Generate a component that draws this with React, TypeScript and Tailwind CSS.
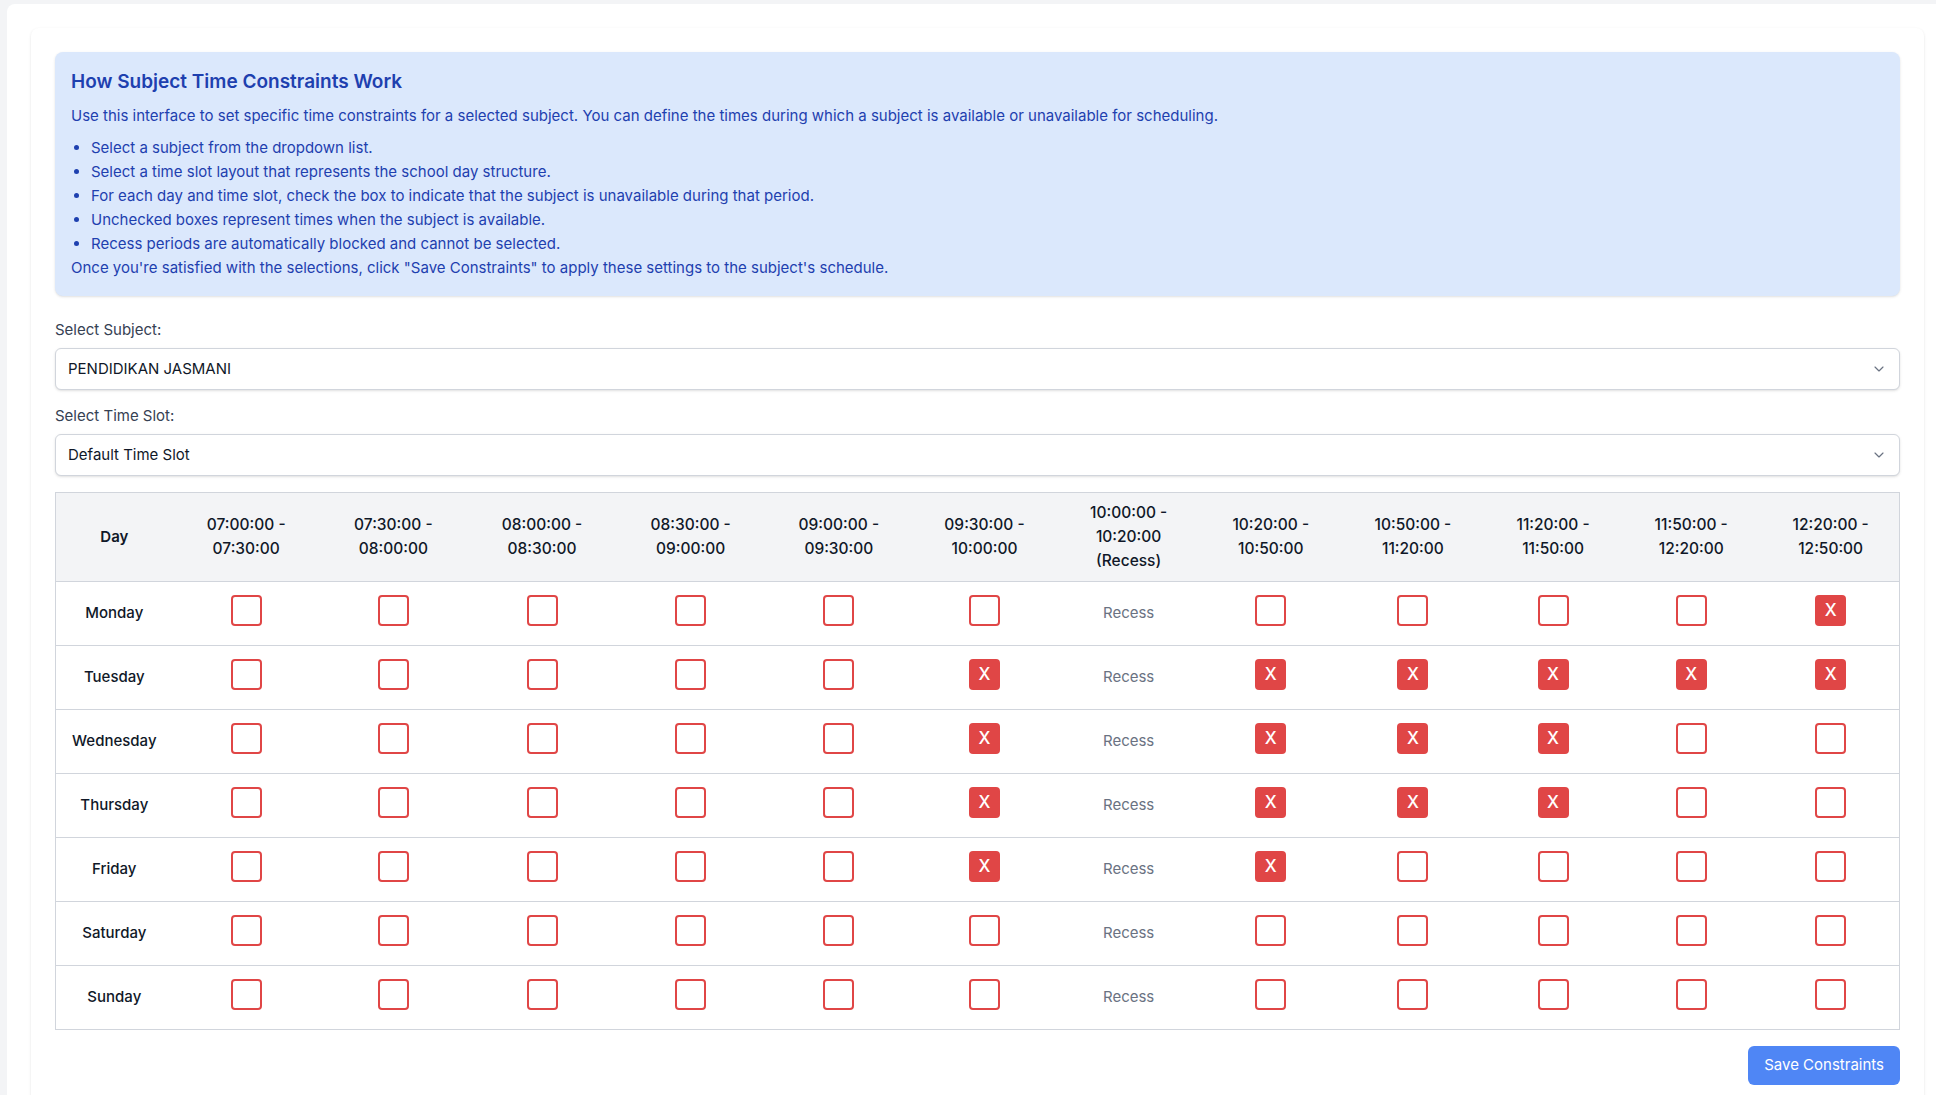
import { ChevronDown } from "lucide-react";

const slots = [
    { start: "07:00:00", end: "07:30:00", w: "w-[147px]" },
    { start: "07:30:00", end: "08:00:00", w: "w-[147px]" },
    { start: "08:00:00", end: "08:30:00", w: "w-[150px]" },
    { start: "08:30:00", end: "09:00:00", w: "w-[147px]" },
    { start: "09:00:00", end: "09:30:00", w: "w-[149px]" },
    { start: "09:30:00", end: "10:00:00", w: "w-[142px]" },
    { start: "10:00:00", end: "10:20:00", w: "w-[146px]", recess: true },
    { start: "10:20:00", end: "10:50:00", w: "w-[138px]" },
    { start: "10:50:00", end: "11:20:00", w: "w-[146px]" },
    { start: "11:20:00", end: "11:50:00", w: "w-[134px]" },
    { start: "11:50:00", end: "12:20:00", w: "w-[142px]" },
    { start: "12:20:00", end: "12:50:00", w: "w-[137px]" },
];

// indexes into slots that are blocked for each day
const blocked: Record<string, number[]> = {
    Monday: [11],
    Tuesday: [5, 7, 8, 9, 10, 11],
    Wednesday: [5, 7, 8, 9],
    Thursday: [5, 7, 8, 9],
    Friday: [5, 7],
    Saturday: [],
    Sunday: [],
};

const notes = [
    "Select a subject from the dropdown list.",
    "Select a time slot layout that represents the school day structure.",
    "For each day and time slot, check the box to indicate that the subject is unavailable during that period.",
    "Unchecked boxes represent times when the subject is available.",
    "Recess periods are automatically blocked and cannot be selected.",
];

const Checkbox = ({ checked }: { checked: boolean }) =>
    checked ? (
        <div className="mx-auto w-[31px] h-[31px] rounded bg-[#e04646] flex items-center justify-center text-white text-[17px] font-medium leading-none">
            X
        </div>
    ) : (
        <div className="mx-auto w-[31px] h-[31px] rounded border-2 border-[#e04646] bg-white" />
    );

const SelectBox = ({ label, value }: { label: string; value: string }) => (
    <div className="mb-4">
        <div className="text-[15px] leading-5 text-gray-700 mb-2">{label}</div>
        <div className="h-[42px] w-full flex items-center justify-between pl-3 pr-3 border border-gray-300 rounded-md bg-white shadow-sm text-[15px] text-gray-900">
            <span>{value}</span>
            <ChevronDown className="size-4 text-gray-500" strokeWidth={1.75} />
        </div>
    </div>
);

export default function App() {
    return (
        <div className="min-h-screen overflow-hidden bg-[#f3f4f6] pl-[7px] pt-1 font-['Inter',sans-serif]">
            <div className="w-[1941px] bg-white rounded-lg p-6">
                <div className="bg-white rounded-lg shadow-sm p-6">
                    <div className="bg-[#dbe8fc] rounded-lg shadow-sm p-4 mb-6 text-[#1e40af]">
                        <h2 className="text-[19px] leading-7 font-semibold mb-2">
                            How Subject Time Constraints Work
                        </h2>
                        <p className="text-[15px] leading-6">
                            Use this interface to set specific time constraints for a selected subject. You can define the times during which a subject is available or unavailable for scheduling.
                        </p>
                        <ul className="list-disc pl-5 mt-2 text-[15px] leading-6">
                            {notes.map((n) => (
                                <li key={n}>{n}</li>
                            ))}
                        </ul>
                        <p className="text-[15px] leading-6">
                            Once you're satisfied with the selections, click "Save Constraints" to apply these settings to the subject's schedule.
                        </p>
                    </div>

                    <SelectBox label="Select Subject:" value="PENDIDIKAN JASMANI" />
                    <SelectBox label="Select Time Slot:" value="Default Time Slot" />

                    <table className="w-full table-fixed border-collapse border border-gray-300 text-[15px] text-gray-900">
                        <thead className="bg-[#f3f4f6]">
                            <tr>
                                <th className="w-[117px] py-2 font-semibold leading-6 align-middle">Day</th>
                                {slots.map((s) => (
                                    <th key={s.start} className={`${s.w} py-2 text-[15.5px] font-medium leading-6 align-middle`}>
                                        <span className="block">{s.start} -</span>
                                        <span className="block">{s.end}</span>
                                        {s.recess && <span className="block">(Recess)</span>}
                                    </th>
                                ))}
                            </tr>
                        </thead>
                        <tbody>
                            {Object.keys(blocked).map((day) => (
                                <tr key={day} className="border-t border-gray-300">
                                    <td className="py-4 text-center font-medium align-middle">{day}</td>
                                    {slots.map((s, i) =>
                                        s.recess ? (
                                            <td key={s.start} className="text-center text-gray-500 align-middle">
                                                Recess
                                            </td>
                                        ) : (
                                            <td key={s.start} className="pt-[13px] pb-[19px] align-top">
                                                <Checkbox checked={blocked[day].includes(i)} />
                                            </td>
                                        ),
                                    )}
                                </tr>
                            ))}
                        </tbody>
                    </table>

                    <div className="flex justify-end mt-4">
                        <button className="h-[39px] px-4 rounded-md bg-[#4f86f5] text-white text-[15px]">
                            Save Constraints
                        </button>
                    </div>
                </div>
            </div>
        </div>
    );
}
